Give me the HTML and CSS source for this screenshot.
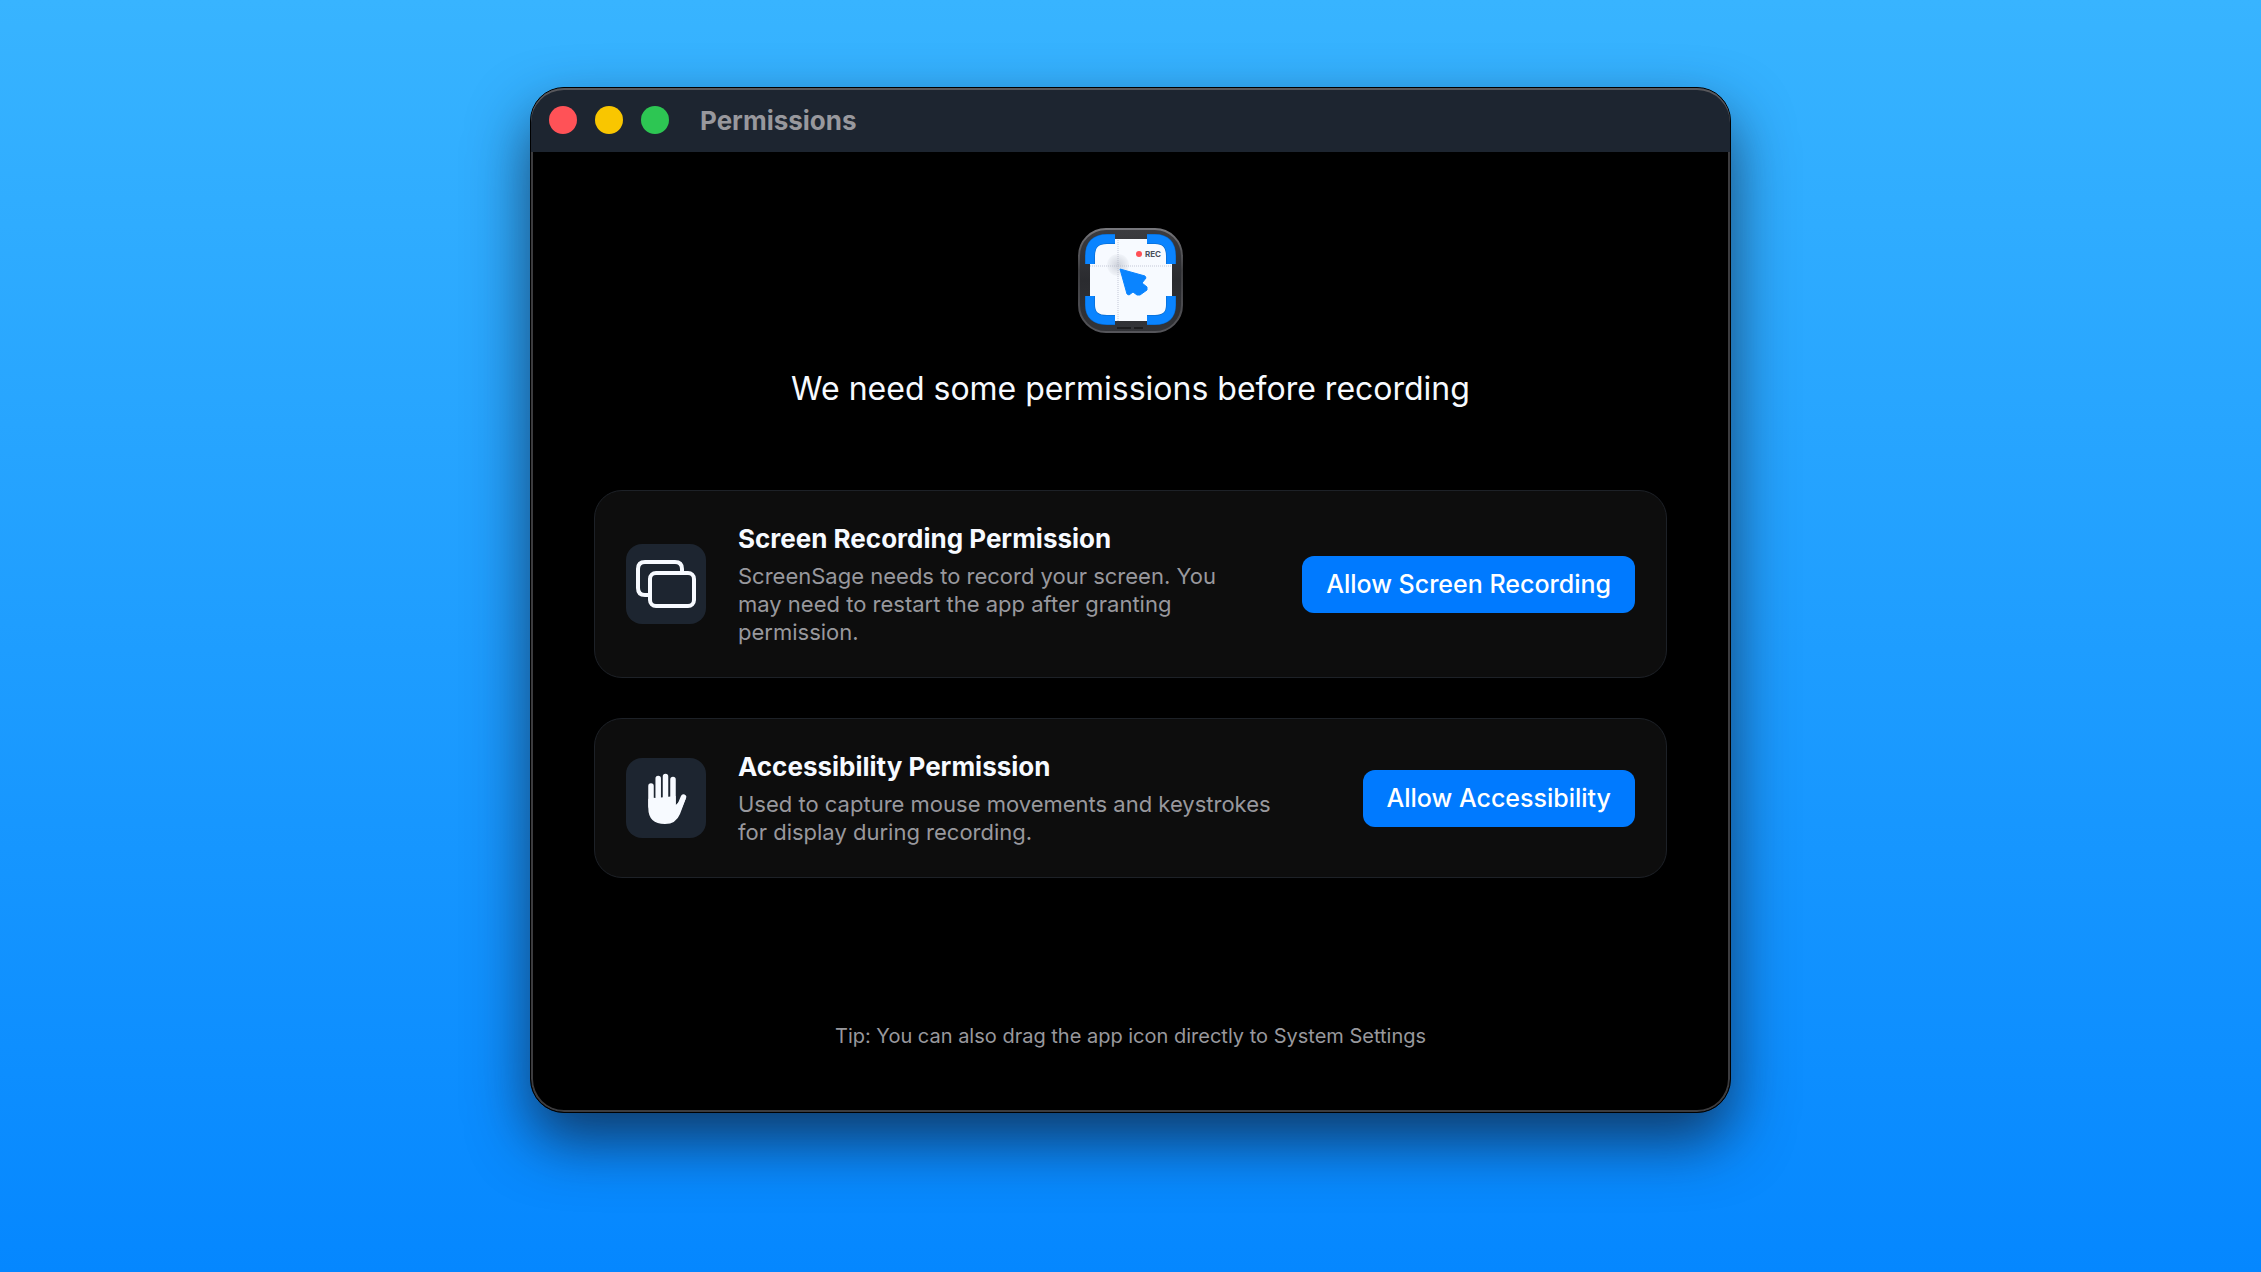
FILE: index.html
```html
<!DOCTYPE html>
<html lang="en">
<head>
  <meta charset="UTF-8">
  <meta name="viewport" content="width=device-width, initial-scale=1">
  <title>Permissions</title>
  <link rel="stylesheet" href="styles.css">
</head>
<body>
  <div class="window">
    <header class="titlebar">
      <div class="lights">
        <button class="light close" aria-label="Close"></button>
        <button class="light minimize" aria-label="Minimize"></button>
        <button class="light zoom" aria-label="Zoom"></button>
      </div>
      <span class="window-title">Permissions</span>
    </header>

    <main>
      <svg class="app-icon" viewBox="0 0 106 106" aria-hidden="true">
        <defs>
          <linearGradient id="frame" x1="0" y1="0" x2="0" y2="1">
            <stop offset="0" stop-color="#3c3c40"/>
            <stop offset="0.5" stop-color="#2a2b2f"/>
            <stop offset="1" stop-color="#333438"/>
          </linearGradient>
          <linearGradient id="rim" x1="0" y1="0" x2="0" y2="1">
            <stop offset="0" stop-color="#77777c"/>
            <stop offset="0.4" stop-color="#3c3c3f"/>
            <stop offset="1" stop-color="#55555a"/>
          </linearGradient>
          <radialGradient id="ripple">
            <stop offset="0" stop-color="#b4b9c4" stop-opacity="0.6"/>
            <stop offset="1" stop-color="#b4b9c4" stop-opacity="0.1"/>
          </radialGradient>
        </defs>
        <rect x="1" y="1" width="103" height="103" rx="27" fill="url(#frame)" stroke="url(#rim)" stroke-width="2"/>
        <rect x="12" y="11" width="82" height="82" rx="14" fill="#f7faff"/>
        <path d="M40 12v81M12 38h82" stroke="#c3c7d6" stroke-width="1" stroke-dasharray="1 1"/>
        <circle cx="40" cy="37" r="11" fill="url(#ripple)"/>
        <g fill="none" stroke="#0664c4" stroke-width="10">
          <path d="M12 36V28Q12 11 29 11H37"/>
          <path d="M69 11H77Q93 11 93 28V36"/>
          <path d="M93 68V77Q93 92 77 92H69"/>
          <path d="M37 92H29Q12 92 12 77V68"/>
        </g>
        <g fill="none" stroke="#0a84ff" stroke-width="9">
          <path d="M12 36V28Q12 11 29 11H37"/>
          <path d="M69 11H77Q93 11 93 28V36"/>
          <path d="M93 68V77Q93 92 77 92H69"/>
          <path d="M37 92H29Q12 92 12 77V68"/>
        </g>
        <path d="M42 41L67 48L68 50L64 55L69 59V62L62 67H59L55 64L51 67L49 66Z" fill="#0a84ff" stroke="#0a84ff" stroke-width="1" stroke-linejoin="round"/>
        <circle cx="61" cy="26" r="3" fill="#ff4f55"/>
        <text x="67" y="29" class="rec">REC</text>
        <path d="M39 100h14M56 100h9" stroke="#1c1c1e" stroke-width="2"/>
      </svg>

      <h1>We need some permissions before recording</h1>

      <section class="card">
        <div class="tile">
          <svg viewBox="0 0 80 80" aria-hidden="true">
            <g fill="none" stroke="#f7faff" stroke-width="4">
              <path d="M24 51H19Q12 51 12 44V25Q12 18 19 18H49Q56 18 56 25V29"/>
              <rect x="24" y="29" width="44" height="33" rx="6"/>
            </g>
          </svg>
        </div>
        <div class="card-text">
          <h2>Screen Recording Permission</h2>
          <p>ScreenSage needs to record your screen. You may need to restart the app after granting permission.</p>
        </div>
        <button class="allow">Allow Screen Recording</button>
      </section>

      <section class="card">
        <div class="tile">
          <svg viewBox="0 0 80 80" aria-hidden="true">
            <g fill="none" stroke="#f7faff" stroke-width="5.500" stroke-linecap="round">
              <path d="M25 28V48M32.200 20.500V44M39.500 18.500V44M47 21.500V46M57.500 39L52 52"/>
            </g>
            <path d="M22.300 41Q26 39 30 40L49.700 38V47L55 42L60 40L54 56Q50 66 39 66Q22.300 66 22.300 50Z" fill="#f7faff"/>
          </svg>
        </div>
        <div class="card-text">
          <h2>Accessibility Permission</h2>
          <p>Used to capture mouse movements and keystrokes for display during recording.</p>
        </div>
        <button class="allow">Allow Accessibility</button>
      </section>
    </main>

    <footer>Tip: You can also drag the app icon directly to System Settings</footer>
  </div>
</body>
</html>
```

FILE: styles.css
```css
*, *::before, *::after {
  box-sizing: border-box;
}

body {
  margin: 0;
  min-height: 100vh;
  padding: 87px 24px;
  display: flex;
  justify-content: center;
  align-items: flex-start;
  font-family: Inter, "Liberation Sans", sans-serif;
  color: #f7faff;
  background: linear-gradient(180deg, #38b4ff, #0587ff);
}

.window {
  width: 100%;
  max-width: 1201px;
  border: 1px solid #000;
  border-radius: 34px;
  background-color: #000;
  box-shadow: inset 0 0 0 2px #3c3c3f, 0 28px 60px rgba(18, 32, 56, 0.75);
}

.titlebar {
  display: flex;
  align-items: center;
  gap: 31px;
  height: 64px;
  padding: 0 18px;
  border-radius: 33px 33px 0 0;
  background-color: #1d2530;
  box-shadow: inset 0 2px 0 #58585c;
}

.lights {
  display: flex;
  gap: 18px;
}

.light {
  width: 28px;
  height: 28px;
  padding: 0;
  border: none;
  border-radius: 50%;
}

.close {
  background-color: #ff5257;
}

.minimize {
  background-color: #f9c600;
}

.zoom {
  background-color: #2dc653;
}

.window-title {
  font-size: 26px;
  font-weight: 700;
  color: #98989d;
}

main {
  display: flex;
  flex-direction: column;
  align-items: center;
  gap: 40px;
  padding: 76px 63px 0;
}

.app-icon {
  width: 106px;
  height: 106px;
}

.rec {
  font-size: 8px;
  font-weight: 700;
  fill: #4a4f5c;
}

h1 {
  margin: -6px 0 40px;
  font-size: 32px;
  line-height: 42px;
  font-weight: 400;
}

.card {
  display: flex;
  align-items: center;
  gap: 32px;
  width: 100%;
  padding: 31px;
  border: 1px solid #1d2127;
  border-radius: 28px;
  background-color: #0d0d0d;
}

.tile {
  flex-shrink: 0;
  width: 80px;
  height: 80px;
  border-radius: 16px;
  background-color: #1d2530;
}

.tile svg {
  display: block;
}

.card-text {
  flex: 1;
  padding-right: 32px;
}

h2 {
  margin: 0 0 6px;
  font-size: 26px;
  line-height: 34px;
  font-weight: 700;
}

.card p {
  margin: 0;
  font-size: 22px;
  line-height: 28px;
  color: #98989d;
}

.allow {
  padding: 12px 24px;
  border: none;
  border-radius: 12px;
  font: 500 25px/33px Inter, "Liberation Sans", sans-serif;
  color: #fff;
  background-color: #007aff;
}

footer {
  padding: 144px 64px 62px;
  text-align: center;
  font-size: 20px;
  line-height: 28px;
  color: #98989d;
}
```
